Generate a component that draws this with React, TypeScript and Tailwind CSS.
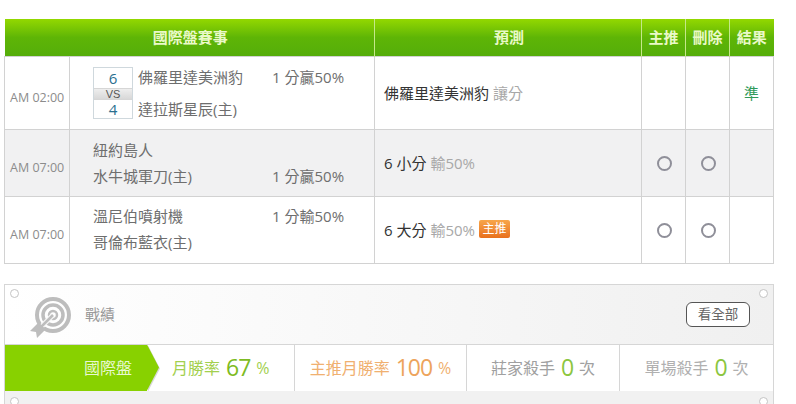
const cjk = "font-['Open_Sans','Noto_Sans_CJK_TC',sans-serif]";

function Dot() {
  return <span className="mx-auto block h-[15px] w-[15px] rounded-full border-[2.5px] border-[#8f8f99]" />;
}

function Pin() {
  return <span className="block h-[9px] w-[9px] rounded-full border border-[#c4c4c4] bg-white" />;
}

function TargetIcon() {
  return (
    <svg width="42" height="42" viewBox="0 0 42 42" fill="none">
      <circle cx="23" cy="18" r="16" stroke="#bdbdbd" strokeWidth="4" />
      <circle cx="23" cy="18" r="10" stroke="#bdbdbd" strokeWidth="3.5" />
      <circle cx="23" cy="18" r="4" stroke="#bdbdbd" strokeWidth="2.5" />
      <path d="M23 18 L10 31" stroke="#f8f8f8" strokeWidth="5" />
      <path d="M23 18 L10 31" stroke="#bdbdbd" strokeWidth="2.5" />
      <path d="M0 34 L9 25 L12 29 L16 32 L7 41 L6 35 Z" fill="#bdbdbd" />
    </svg>
  );
}

function Team({ name, odds, className = "" }: { name: string; odds?: string; className?: string }) {
  return (
    <div className={`flex h-[26px] items-center ${className}`}>
      <span className="w-[179px]">{name}</span>
      {odds ? <span>{odds}</span> : null}
    </div>
  );
}

const headCell = "border-x border-[#c5e88a] text-center text-[15px] font-bold text-[#eaf9c8]";
const bodyCell = "border border-[#d2d2d2]";
const markCell = `${bodyCell} pl-[2px] pt-[2px]`;
const timeCell = `${bodyCell} pl-[5px] pt-[11px] text-[12.5px] text-[#8c8c8c]`;
const pickCell = `${bodyCell} pl-[9px] pt-[2px] text-[#333]`;
const bigNum = "text-[23px] tracking-[-1px]";

export default function App() {
  return (
    <div className={`h-[404px] w-[796px] overflow-hidden bg-white pl-1 pt-[19px] ${cjk}`}>
      <table className="w-[770px] table-fixed border-collapse text-[15px] text-[#6e6e6e]">
        <colgroup>
          <col className="w-[65px]" />
          <col className="w-[305px]" />
          <col className="w-[267px]" />
          <col className="w-[44px]" />
          <col className="w-[44px]" />
          <col className="w-[44px]" />
        </colgroup>
        <thead>
          <tr className="h-[37px] bg-gradient-to-b from-[#93d800] via-[#5eb506] via-50% to-[#55ad0a]">
            <th colSpan={2} className={`${headCell} border-l-0 pl-[2px]`}>國際盤賽事</th>
            <th className={`${headCell} pl-[2px]`}>預測</th>
            <th className={`${headCell} text-[14px]`}>主推</th>
            <th className={`${headCell} text-[14px]`}>刪除</th>
            <th className={`${headCell} border-r-0 text-[14px]`}>結果</th>
          </tr>
        </thead>
        <tbody>
          <tr className="h-[73px]">
            <td className={timeCell}>AM 02:00</td>
            <td className={`${bodyCell} pl-[23px]`}>
              <div className="flex items-center gap-[5px]">
                <div className="flex h-[52px] w-[40px] flex-col border border-[#cfd8dd] text-center text-[15px] text-[#2a6f8f]">
                  <span className="h-[20px] leading-[20px]">6</span>
                  <span className="h-[12px] border-y border-[#d6d6d6] bg-gradient-to-b from-[#eeeeee] to-[#d8d8d8] font-['Liberation_Sans',sans-serif] text-[11px] leading-[10px] text-[#555]">VS</span>
                  <span className="flex-1 leading-[18px]">4</span>
                </div>
                <div className="flex flex-col gap-[10px] pt-0.5">
                  <div className="flex h-[22px] items-center">
                    <span className="w-[134px]">佛羅里達美洲豹</span>
                    <span>1 分贏50%</span>
                  </div>
                  <div className="flex h-[22px] items-center">達拉斯星辰(主)</div>
                </div>
              </div>
            </td>
            <td className={pickCell}>
              佛羅里達美洲豹 <span className="text-[#a8a8a8]">讓分</span>
            </td>
            <td className={bodyCell} />
            <td className={bodyCell} />
            <td className={`${bodyCell} pt-[2px] text-center text-[#2f9a5a]`}>準</td>
          </tr>
          <tr className="h-[67px] bg-[#f1f1f2]">
            <td className={timeCell}>AM 07:00</td>
            <td className={`${bodyCell} pl-[23px] pt-[2px]`}>
              <Team name="紐約島人" />
              <Team name="水牛城軍刀(主)" odds="1 分贏50%" />
            </td>
            <td className={pickCell}>
              6 小分 <span className="text-[#a8a8a8]">輸50%</span>
            </td>
            <td className={markCell}><Dot /></td>
            <td className={markCell}><Dot /></td>
            <td className={bodyCell} />
          </tr>
          <tr className="h-[67px]">
            <td className={timeCell}>AM 07:00</td>
            <td className={`${bodyCell} pl-[23px]`}>
              <Team name="溫尼伯噴射機" odds="1 分輸50%" />
              <Team name="哥倫布藍衣(主)" />
            </td>
            <td className={pickCell}>
              <div className="flex items-center">
                <span className="whitespace-pre">6 大分 </span>
                <span className="text-[#a8a8a8]">輸50%</span>
                <span className="ml-[4px] -mt-[3px] flex h-[18px] w-[31px] items-center justify-center rounded-[2px] bg-gradient-to-b from-[#f7a64a] to-[#e8701c] text-[12px] text-white">主推</span>
              </div>
            </td>
            <td className={markCell}><Dot /></td>
            <td className={markCell}><Dot /></td>
            <td className={bodyCell} />
          </tr>
        </tbody>
      </table>

      <section className="mt-5 w-[770px] border border-[#d6d6d6]">
        <div className="relative flex h-[59px] items-center justify-between bg-gradient-to-r from-white to-[#f0f0f0] pl-[25px] pr-[5px]">
          <span className="absolute left-[5px] top-[4px]"><Pin /></span>
          <div className="flex items-center gap-[13px]">
            <span className="mt-[7px] block h-[42px]"><TargetIcon /></span>
            <span className="text-[15px] text-[#999]">戰績</span>
          </div>
          <div className="flex items-start gap-[9px] self-start pt-[4px]">
            <button className="mt-[13px] h-[25px] w-[64px] rounded-[6px] border border-[#555] bg-white text-[13.5px] text-[#666]">看全部</button>
            <Pin />
          </div>
        </div>
        <div className="flex h-[47px] items-center border-t border-[#d6d6d6] bg-white text-[16px]">
          <div className="relative flex h-full w-[142px] items-center justify-end bg-[#88d100] pr-[15px] text-[#e8f8d0]">
            國際盤
            <span className="absolute left-full top-0 h-full drop-shadow-[1px_1px_0_#d8d8d8]">
              <span className="block h-full w-[12px] bg-[#88d100] [clip-path:polygon(0_0,100%_50%,0_100%)]" />
            </span>
          </div>
          <div className="flex h-full w-[148px] items-center border-r border-[#d6d6d6] pl-[25px] text-[#a3d04e]">
            月勝率<span className={`ml-1.5 ${bigNum} text-[#7dbb22]`}>67</span><span className="ml-1.5 text-[16px]">%</span>
          </div>
          <div className="flex h-full w-[172px] items-center justify-center border-r border-[#d6d6d6] text-[#f0b070]">
            主推月勝率<span className={`ml-1.5 ${bigNum} text-[#eda45c]`}>100</span><span className="ml-1.5 text-[16px]">%</span>
          </div>
          <div className="flex h-full w-[153px] items-center justify-center border-r border-[#d6d6d6] text-[#a0a0a0]">
            莊家殺手<span className={`mx-1.5 ${bigNum} text-[#8cc63f]`}>0</span>次
          </div>
          <div className="flex h-full flex-1 items-center justify-center text-[#b0b0b0]">
            單場殺手<span className={`mx-1.5 ${bigNum} text-[#8cc63f]`}>0</span>次
          </div>
        </div>
        <div className="flex h-[20px] justify-between bg-[#f1f1f1] px-[5px] pt-[6px]">
          <Pin />
          <Pin />
        </div>
      </section>
    </div>
  );
}
